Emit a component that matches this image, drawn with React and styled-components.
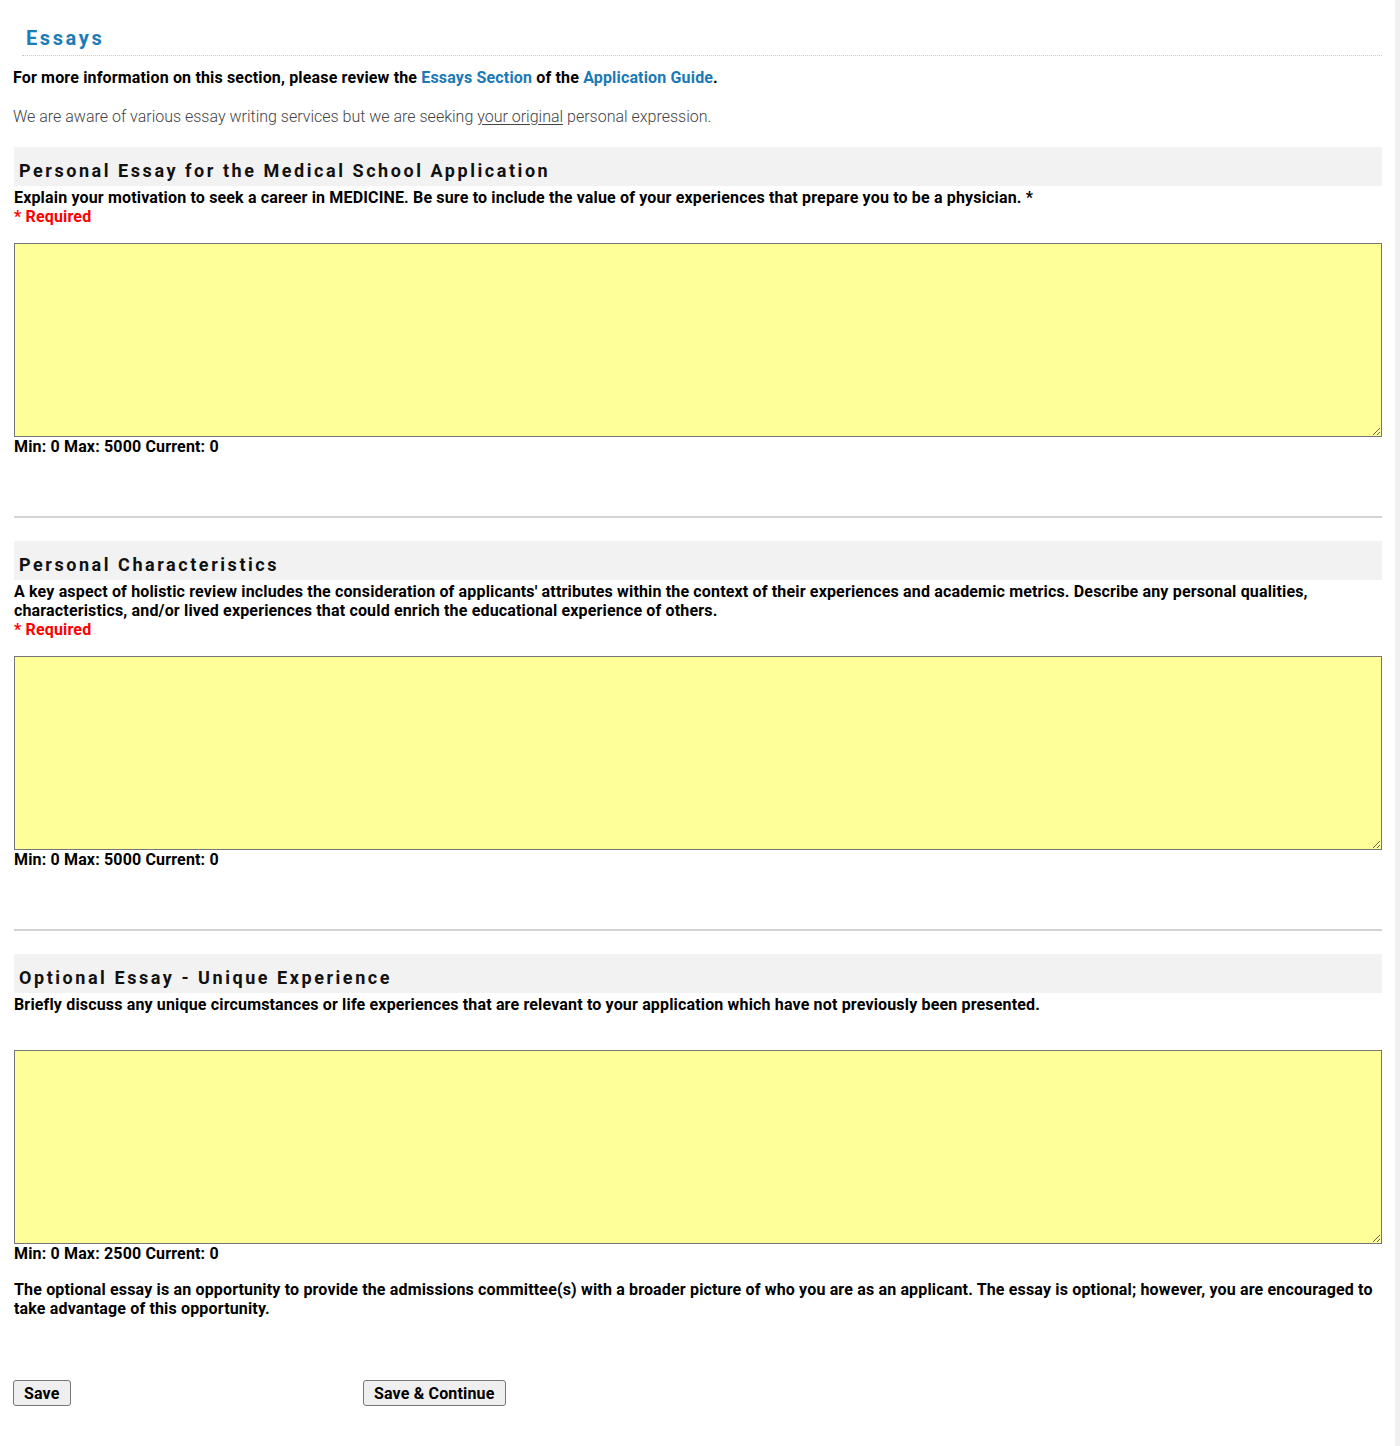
import React from "react";
import styled, { createGlobalStyle } from "styled-components";

const GlobalStyle = createGlobalStyle`
	html, body {
		margin: 0;
		padding: 0;
		background: #fff;
	}

	body {
		font-family: Roboto, "Liberation Sans", Arial, sans-serif;
		color: #000;
	}
`;

const Shell = styled.div`
	display: flex;
	min-height: 1446px;
`;

const Page = styled.div`
	flex: 1;
	padding: 26px 13px 40px 13px;
`;

const Scrollbar = styled.div`
	width: 5px;
	background: #f0f0f0;
`;

const PageTitle = styled.h1`
	margin: 0 0 0 9px;
	padding: 0 0 5px 4px;
	font-size: 20px;
	line-height: 24px;
	font-weight: 700;
	letter-spacing: 2.6px;
	color: #1b7db8;
	border-bottom: 1px dotted #c9c9c0;
`;

const BoldText = styled.p`
	margin: 0;
	font-size: 16px;
	line-height: 19px;
	font-weight: 700;
	letter-spacing: 0.16px;
`;

const Intro = styled(BoldText)`
	margin-top: 12px;
`;

const Link = styled.a`
	color: #1a7ab5;
	text-decoration: none;
`;

const Notice = styled.p`
	margin: 20px 0 0;
	font-size: 16px;
	line-height: 19px;
	font-weight: 300;
	color: #444;

	u {
		text-decoration: underline;
		text-underline-offset: 2px;
	}
`;

const Section = styled.section`
	margin-top: ${({ $first }) => ($first ? "21px" : "23px")};
	padding-left: 1px;
`;

const Band = styled.h2`
	margin: 0;
	height: 39px;
	display: flex;
	align-items: center;
	padding: 7px 0 0 5px;
	box-sizing: border-box;
	background: #f2f2f2;
	font-size: 18px;
	font-weight: 700;
	letter-spacing: 2.55px;
	color: #111;
`;

const Question = styled(BoldText)`
	padding-top: 2px;
`;

const Required = styled(BoldText)`
	height: 19px;
	color: #ff0000;
`;

const EssayBox = styled.textarea`
	display: block;
	width: 100%;
	height: 194px;
	margin-top: 17px;
	box-sizing: border-box;
	background: #ffff99;
	border: 1px solid #767676;
	resize: vertical;
	font-family: inherit;
`;

const Counter = styled(BoldText)``;

const Divider = styled.hr`
	margin: 60px 0 0 1px;
	border: 0;
	height: 2px;
	background: #d4d4d4;
`;

const Note = styled(BoldText)`
	margin: 17px 0 0 1px;
`;

const Actions = styled.div`
	display: grid;
	grid-template-columns: 350px auto;
	justify-items: start;
	margin-top: 62px;
`;

const Button = styled.button`
	height: 26px;
	padding: 0 10px;
	font-family: inherit;
	font-size: 16px;
	font-weight: 700;
	letter-spacing: 0.16px;
	color: #000;
	background: #efefef;
	border: 1px solid #767676;
	border-radius: 3px;
`;

const essays = [
	{
		title: "Personal Essay for the Medical School Application",
		question:
			"Explain your motivation to seek a career in MEDICINE. Be sure to include the value of your experiences that prepare you to be a physician. *",
		required: true,
		max: 5000,
	},
	{
		title: "Personal Characteristics",
		question:
			"A key aspect of holistic review includes the consideration of applicants' attributes within the context of their experiences and academic metrics. Describe any personal qualities, characteristics, and/or lived experiences that could enrich the educational experience of others.",
		required: true,
		max: 5000,
	},
	{
		title: "Optional Essay - Unique Experience",
		question:
			"Briefly discuss any unique circumstances or life experiences that are relevant to your application which have not previously been presented.",
		required: false,
		max: 2500,
	},
];

export default function App() {
	return (
		<Shell>
			<GlobalStyle />
			<Page>
				<PageTitle>Essays</PageTitle>
				<Intro>
					For more information on this section, please review the{" "}
					<Link href="#">Essays Section</Link> of the <Link href="#">Application Guide</Link>.
				</Intro>
				<Notice>
					We are aware of various essay writing services but we are seeking <u>your original</u> personal
					expression.
				</Notice>

				{essays.map((essay, i) => (
					<React.Fragment key={essay.title}>
						{i > 0 && <Divider />}
						<Section $first={i === 0}>
							<Band>{essay.title}</Band>
							<Question>{essay.question}</Question>
							<Required>{essay.required ? "* Required" : ""}</Required>
							<EssayBox />
							<Counter>Min: 0 Max: {essay.max} Current: 0</Counter>
						</Section>
					</React.Fragment>
				))}

				<Note>
					The optional essay is an opportunity to provide the admissions committee(s) with a broader picture of
					who you are as an applicant. The essay is optional; however, you are encouraged to take advantage of
					this opportunity.
				</Note>

				<Actions>
					<Button>Save</Button>
					<Button>Save &amp; Continue</Button>
				</Actions>
			</Page>
			<Scrollbar />
		</Shell>
	);
}
